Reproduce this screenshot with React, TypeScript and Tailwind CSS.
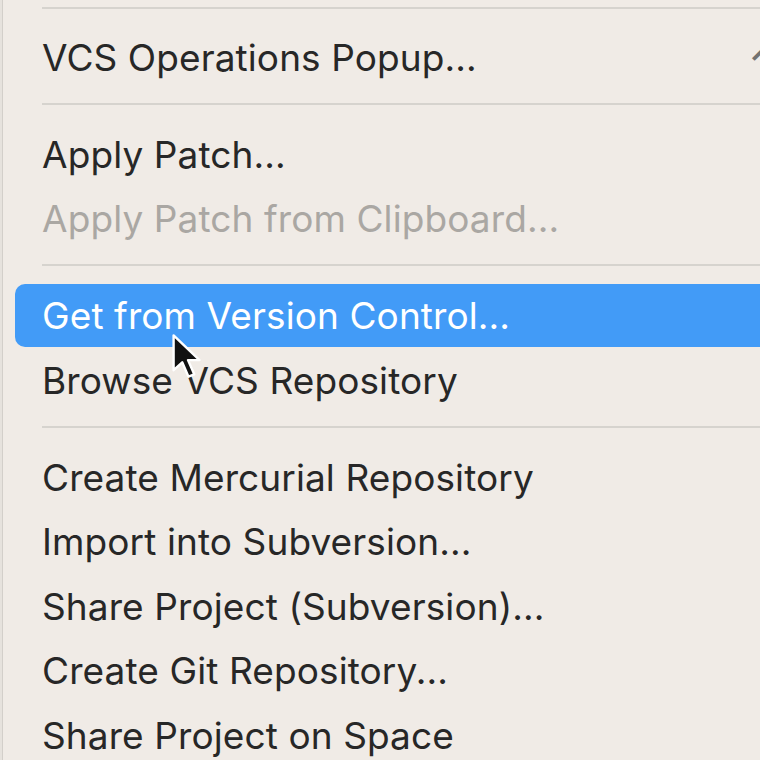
import React from "react";

const font = { fontFamily: "Inter, 'Noto Sans', sans-serif" };

function Sep({ first = false }: { first?: boolean }) {
  return (
    <div className={"shrink-0 " + (first ? "h-[25px] pt-[7px]" : "h-[32.5px] pt-[13px]")}>
      <div className="ml-[39px] h-[2px] bg-[#d6d3ce]" />
    </div>
  );
}

function Item({
  label,
  disabled = false,
  active = false,
  shortcut,
}: {
  label: string;
  disabled?: boolean;
  active?: boolean;
  shortcut?: string;
}) {
  return (
    <div className="h-[64.5px] shrink-0 flex items-center">
      <div
        className={
          "flex items-center h-[63px] w-full ml-[12px] pl-[27px] " +
          (active
            ? "rounded-[10px] bg-[#429bf7] text-white"
            : disabled
            ? "text-[#aaa7a3]"
            : "text-[#272727]")
        }
      >
        <span className="text-[37px] leading-none tracking-[0.1px] whitespace-nowrap">{label}</span>
        <span className="flex-1" />
        {shortcut ? (
          <span
            className="w-[60px] shrink-0 translate-y-[10px] text-[44px] leading-none text-[#737270] whitespace-nowrap"
            style={{ fontFamily: "'DejaVu Sans', sans-serif" }}
          >
            {shortcut}
          </span>
        ) : null}
      </div>
    </div>
  );
}

export default function App() {
  return (
    <div
      className="w-[760px] h-[760px] overflow-hidden bg-[#f0ebe6] flex relative"
      style={font}
    >
      <div className="w-[3px] shrink-0 bg-[#e6e2dd] border-r border-[#d3cfca]" />
      <div className="w-[800px] shrink-0 flex flex-col">
        <Sep first />
        <Item label="VCS Operations Popup..." shortcut="⌃V" />
        <Sep />
        <Item label="Apply Patch..." />
        <Item label="Apply Patch from Clipboard..." disabled />
        <Sep />
        <Item label="Get from Version Control..." active />
        <Item label="Browse VCS Repository" />
        <Sep />
        <Item label="Create Mercurial Repository" />
        <Item label="Import into Subversion..." />
        <Item label="Share Project (Subversion)..." />
        <Item label="Create Git Repository..." />
        <Item label="Share Project on Space" />
      </div>
      <svg
        className="absolute left-[171px] top-[333px]"
        width="34"
        height="48"
        viewBox="0 0 14 20"
      >
        <path
          d="M1 1 L1 15.5 L4.6 12.2 L7.2 18.2 L9.6 17.2 L7 11.3 L11.8 11.3 Z"
          fill="#111"
          stroke="#fff"
          strokeWidth="1"
          strokeLinejoin="round"
        />
      </svg>
    </div>
  );
}
